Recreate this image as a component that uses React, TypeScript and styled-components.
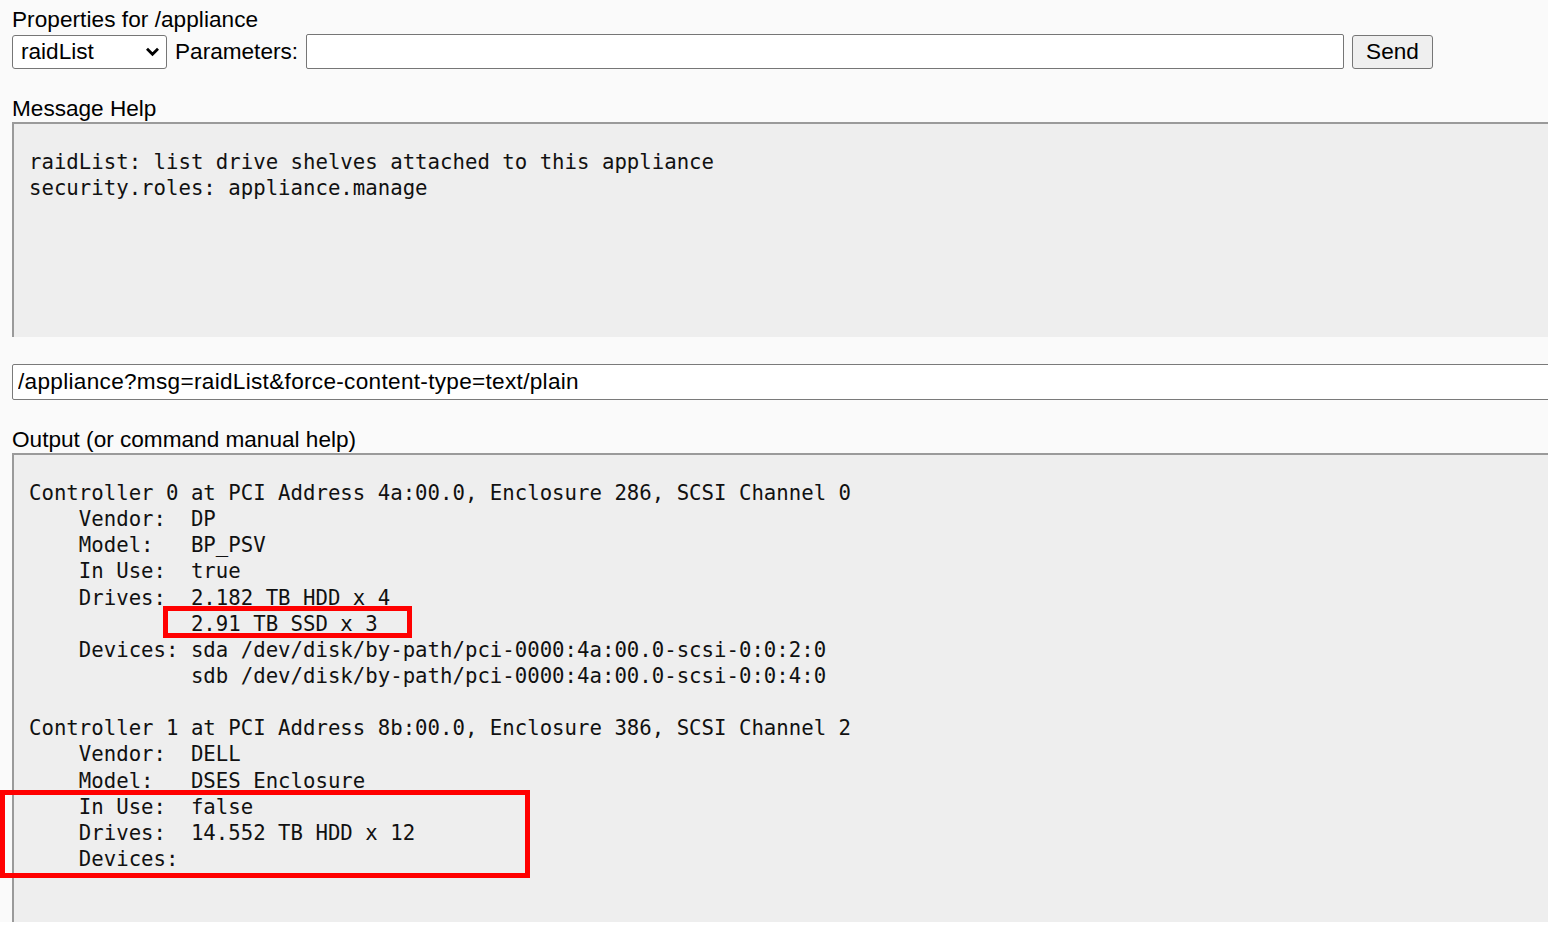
import React from "react";
import styled, { createGlobalStyle } from "styled-components";

const GlobalStyle = createGlobalStyle`
  html, body {
    margin: 0;
    padding: 0;
    background: #ffffff;
    overflow: hidden;
  }
  body {
    font-family: "Liberation Sans", Arial, sans-serif;
  }
`;

const Page = styled.div`
  width: 1548px;
  height: 922px;
  overflow: hidden;
  background: #fafafa;
  padding: 7px 0 0 12px;
  box-sizing: border-box;
  font-family: "Liberation Sans", Arial, sans-serif;
  font-size: 22.6px;
  color: #000;
`;

const Label = styled.div<{ $gap?: number }>`
  height: 26px;
  line-height: 26px;
  margin-top: ${(p) => p.$gap ?? 0}px;
  white-space: nowrap;
`;

const Title = styled.div`
  height: 26px;
  line-height: 26px;
  white-space: nowrap;
  letter-spacing: 0.05px;
`;

const ControlRow = styled.div`
  display: flex;
  align-items: center;
  gap: 8px;
  margin-top: 1px;
  height: 35px;
  width: 1421px;
`;

const SelectWrap = styled.div`
  position: relative;
  width: 155px;
  height: 34px;
  flex: none;
`;

const Select = styled.select`
  appearance: none;
  -webkit-appearance: none;
  width: 100%;
  height: 100%;
  box-sizing: border-box;
  border: 1px solid #767676;
  border-radius: 3px;
  background: #ffffff;
  font-family: "Liberation Sans", Arial, sans-serif;
  font-size: 22.6px;
  color: #000;
  padding: 0 0 0 8px;
  margin: 0;
  outline: none;
`;

const Chevron = styled.svg`
  position: absolute;
  right: 7px;
  top: 11px;
  width: 15px;
  height: 11px;
  pointer-events: none;
`;

const InlineLabel = styled.span`
  flex: none;
  white-space: nowrap;
`;

const ParamInput = styled.input`
  flex: 1;
  min-width: 0;
  height: 35px;
  box-sizing: border-box;
  border: 1px solid #767676;
  border-radius: 2px;
  background: #ffffff;
  margin: 0;
  padding: 0 5px;
  font-family: "Liberation Sans", Arial, sans-serif;
  font-size: 22.6px;
`;

const SendButton = styled.button`
  flex: none;
  width: 81px;
  height: 34px;
  box-sizing: border-box;
  border: 1px solid #767676;
  border-radius: 3px;
  background: #efefef;
  margin: 0;
  padding: 0;
  font-family: "Liberation Sans", Arial, sans-serif;
  font-size: 22.6px;
  color: #000;
`;

const TextBox = styled.textarea<{ $height: number }>`
  display: block;
  width: 1560px;
  height: ${(p) => p.$height}px;
  box-sizing: border-box;
  margin: 0;
  padding: 25px 0 0 15px;
  border-style: solid;
  border-width: 2px 0 0 2px;
  border-color: #9a9a9a;
  background: #eeeeee;
  color: #111;
  font-family: "DejaVu Sans Mono", "Liberation Mono", monospace;
  font-size: 20.7px;
  line-height: 26.14px;
  resize: none;
  overflow: hidden;
  outline: none;
  white-space: pre;
`;

const UrlInput = styled.input`
  display: block;
  width: 1560px;
  height: 36px;
  box-sizing: border-box;
  margin: 27px 0 0 0;
  padding: 0 5px;
  border: 1px solid #7a7a7a;
  border-radius: 2px;
  background: #ffffff;
  font-family: "Liberation Sans", Arial, sans-serif;
  font-size: 22.6px;
  letter-spacing: 0.3px;
  color: #000;
`;

const OutputWrap = styled.div`
  position: relative;
`;

const Highlight = styled.div<{ $left: number; $top: number; $w: number; $h: number }>`
  position: absolute;
  left: ${(p) => p.$left}px;
  top: ${(p) => p.$top}px;
  width: ${(p) => p.$w}px;
  height: ${(p) => p.$h}px;
  box-sizing: border-box;
  border: 5px solid #ff0000;
  pointer-events: none;
`;

const helpText = `raidList: list drive shelves attached to this appliance
security.roles: appliance.manage`;

const outputText = `Controller 0 at PCI Address 4a:00.0, Enclosure 286, SCSI Channel 0
    Vendor:  DP
    Model:   BP_PSV
    In Use:  true
    Drives:  2.182 TB HDD x 4
             2.91 TB SSD x 3
    Devices: sda /dev/disk/by-path/pci-0000:4a:00.0-scsi-0:0:2:0
             sdb /dev/disk/by-path/pci-0000:4a:00.0-scsi-0:0:4:0

Controller 1 at PCI Address 8b:00.0, Enclosure 386, SCSI Channel 2
    Vendor:  DELL
    Model:   DSES Enclosure
    In Use:  false
    Drives:  14.552 TB HDD x 12
    Devices:`;

export default function App() {
  return (
    <>
      <GlobalStyle />
      <Page>
        <Title>Properties for /appliance</Title>
        <ControlRow>
          <SelectWrap>
            <Select defaultValue="raidList">
              <option value="raidList">raidList</option>
            </Select>
            <Chevron viewBox="0 0 15 11">
              <path d="M2 2.8 L7.5 8.3 L13 2.8" fill="none" stroke="#000" strokeWidth="2.8" />
            </Chevron>
          </SelectWrap>
          <InlineLabel>Parameters:</InlineLabel>
          <ParamInput type="text" />
          <SendButton>Send</SendButton>
        </ControlRow>
        <Label $gap={27}>Message Help</Label>
        <TextBox $height={215} readOnly value={helpText} />
        <UrlInput type="text" readOnly value="/appliance?msg=raidList&force-content-type=text/plain" />
        <Label $gap={27}>Output (or command manual help)</Label>
        <OutputWrap>
          <TextBox $height={469} readOnly value={outputText} />
          <Highlight $left={151} $top={153} $w={249} $h={32} />
          <Highlight $left={-12} $top={337} $w={530} $h={88} />
        </OutputWrap>
      </Page>
    </>
  );
}
